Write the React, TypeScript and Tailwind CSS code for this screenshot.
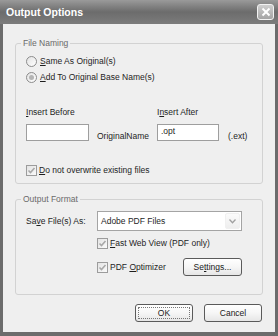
import React from "react";

const font = "font-['Liberation_Sans',Arial,sans-serif]";

function Radio({ checked, children }: { checked?: boolean; children: React.ReactNode }) {
  return (
    <div className="flex items-center h-[14px]">
      <span className="w-[11px] h-[11px] rounded-full border border-[#8c8c8c] bg-gradient-to-br from-[#e2e2e2] to-[#ffffff] flex items-center justify-center">
        {checked && <span className="w-[5px] h-[5px] rounded-full bg-[#b4b4b4]" />}
      </span>
      <span className="ml-[3px]">{children}</span>
    </div>
  );
}

function Check({ children }: { children: React.ReactNode }) {
  return (
    <div className="flex items-center h-[14px]">
      <span className="w-[11px] h-[11px] border border-[#9c9c9c] bg-gradient-to-br from-[#e4e4e4] to-[#fafafa] flex items-center justify-center">
        <svg width="9" height="9" viewBox="0 0 9 9">
          <path d="M1.5 4.5 L3.5 6.5 L7.5 2" stroke="#a8a8a8" strokeWidth="1.6" fill="none" />
        </svg>
      </span>
      <span className="ml-[2px]">{children}</span>
    </div>
  );
}

function Btn({ children, focus, w }: { children: React.ReactNode; focus?: boolean; w: string }) {
  return (
    <button className={`${w} h-[18px] rounded-[3px] border border-[#5a5a5a] bg-gradient-to-b from-[#ffffff] via-[#f6f6f6] to-[#e6e6e6] p-[2px] text-[#1a1a1a]`}>
      <span className={`flex h-full w-full items-center justify-center ${focus ? "border border-dotted border-[#777]" : ""}`}>
        {children}
      </span>
    </button>
  );
}

export default function App() {
  return (
    <div className={`w-[278px] h-[336px] flex flex-col bg-[#6c6c6c] text-[8.5px] leading-[12px] text-[#1e1e1e] ${font}`}>
      {/* title bar */}
      <div className="h-[24px] flex items-center justify-between pl-[6px] pr-[4px] bg-gradient-to-b from-[#9a9a9a] via-[#6c6c6c] to-[#7c7c7c]">
        <span className="text-white font-bold text-[10.5px]">Output Options</span>
        <span className="w-[17px] h-[16px] rounded-[3px] border border-[#f2f2f2] bg-gradient-to-b from-[#cfcfcf] to-[#a4a4a4] flex items-center justify-center">
          <svg width="10" height="10" viewBox="0 0 10 10">
            <path d="M1.5 1.5 L8.5 8.5 M8.5 1.5 L1.5 8.5" stroke="#ffffff" strokeWidth="1.9" />
          </svg>
        </span>
      </div>

      {/* body */}
      <div className="flex-1 mx-[3px] mb-[4px] bg-[#efefef] px-[12px] pt-[13px] flex flex-col">
        <fieldset className="border border-[#d2d2d2] rounded-[3px] p-0">
          <legend className="ml-[5px] px-[2px] text-[#6a6a6a] leading-[12px]">File Naming</legend>
          <div className="pl-[10px] pt-[5px] pb-[6px]">
            <Radio>
              <u>S</u>ame As Original(s)
            </Radio>
            <div className="mt-[2px]">
              <Radio checked>
                <u>A</u>dd To Original Base Name(s)
              </Radio>
            </div>

            <div className="mt-[22px] grid grid-cols-[63px_68px_62px_auto]">
              <span className="col-span-2">
                <u>I</u>nsert Before
              </span>
              <span className="col-span-2">
                I<u>n</u>sert After
              </span>
            </div>
            <div className="mt-[6px] grid grid-cols-[63px_68px_62px_auto] items-start">
              <div className="h-[17px] border border-[#9e9e9e] bg-white" />
              <span className="pl-[8px] mt-[6px]">OriginalName</span>
              <div className="h-[17px] border border-[#9e9e9e] bg-white pl-[3px] leading-[13px]">.opt</div>
              <span className="pl-[9px] mt-[6px]">(.ext)</span>
            </div>

            <div className="mt-[21px]">
              <Check>
                <u>D</u>o not overwrite existing files
              </Check>
            </div>
          </div>
        </fieldset>

        <fieldset className="mt-[9px] border border-[#d2d2d2] rounded-[3px] p-0">
          <legend className="ml-[5px] px-[2px] text-[#6a6a6a] leading-[12px]">Output Format</legend>
          <div className="pl-[10px] pt-[6px] pb-[18px]">
            <div className="flex items-center">
              <span className="w-[71px]">
                Sa<u>v</u>e File(s) As:
              </span>
              <div className="w-[145px] h-[20px] border border-[#a4a4a4] bg-white flex items-center justify-between pl-[3px] pr-[1px]">
                <span>Adobe PDF Files</span>
                <span className="w-[15px] h-[16px] rounded-[2px] bg-gradient-to-b from-[#fbfbfb] to-[#eeeeee] border border-[#f0f0f0] flex items-center justify-center">
                  <svg width="7" height="5" viewBox="0 0 7 5">
                    <path d="M0.5 0.5 L3.5 3.8 L6.5 0.5" stroke="#a0a0a0" strokeWidth="1.3" fill="none" />
                  </svg>
                </span>
              </div>
            </div>
            <div className="ml-[71px] mt-[5px]">
              <Check>
                <u>F</u>ast Web View (PDF only)
              </Check>
            </div>
            <div className="ml-[71px] mt-[8px] w-[145px] flex items-center justify-between">
              <Check>
                PDF <u>O</u>ptimizer
              </Check>
              <Btn w="w-[59px]">
                Se<u>t</u>tings...
              </Btn>
            </div>
          </div>
        </fieldset>

        <div className="mt-[9px] mr-[1px] flex justify-end gap-[11px]">
          <Btn w="w-[58px]" focus>
            OK
          </Btn>
          <Btn w="w-[58px]">Cancel</Btn>
        </div>
      </div>
    </div>
  );
}
